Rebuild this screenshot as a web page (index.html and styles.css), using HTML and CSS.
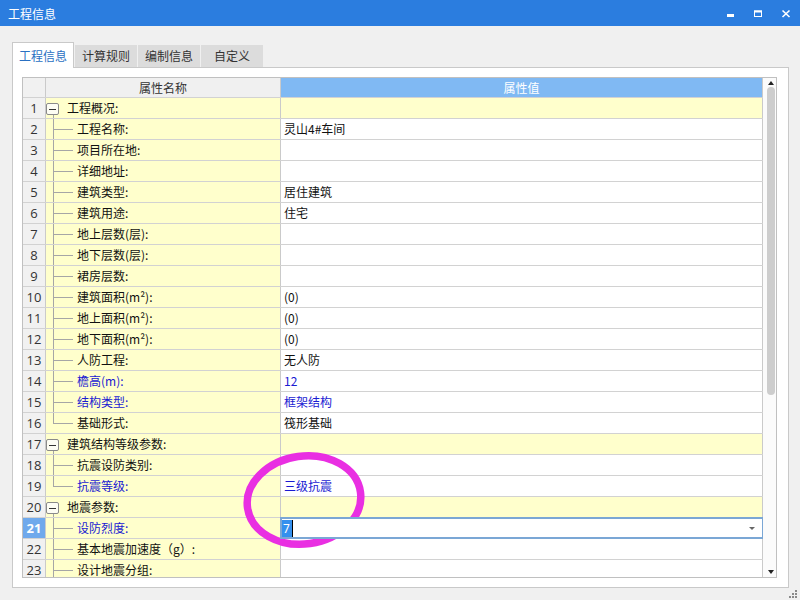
FILE: index.html
```html
<!DOCTYPE html>
<html>
<head>
<meta charset="utf-8">
<link rel="stylesheet" href="styles.css">
</head>
<body>
<div class="window">
  <div class="titlebar">
    <span class="title">工程信息</span>
    <div class="controls">
      <svg class="ctl" width="28" height="26" viewBox="0 0 28 26"><rect x="11" y="14" width="7" height="3" fill="#fff"/></svg>
      <svg class="ctl" width="28" height="26" viewBox="0 0 28 26"><rect x="10.5" y="11" width="7" height="5.5" fill="none" stroke="#fff" stroke-width="1"/><rect x="10" y="10.5" width="8" height="2" fill="#fff"/></svg>
      <svg class="ctl" width="28" height="26" viewBox="0 0 28 26"><path d="M10.5 10.5 L17.5 17 M17.5 10.5 L10.5 17" stroke="#fff" stroke-width="1.6" fill="none"/></svg>
    </div>
  </div>
  <div class="content">
    <div class="tabs">
      <div class="tab active">工程信息</div>
      <div class="tab">计算规则</div>
      <div class="tab">编制信息</div>
      <div class="tab">自定义</div>
    </div>
    <div class="panel">
      <div class="grid">
        <div class="table">
          <div class="row head"><div class="num"></div><div class="name">属性名称</div><div class="val">属性值</div></div>
          <div class="row group"><div class="num">1</div><div class="name open"><span class="box"></span><span>工程概况:</span></div><div class="val"></div></div>
          <div class="row"><div class="num">2</div><div class="name child">工程名称:</div><div class="val">灵山4#车间</div></div>
          <div class="row"><div class="num">3</div><div class="name child">项目所在地:</div><div class="val"></div></div>
          <div class="row"><div class="num">4</div><div class="name child">详细地址:</div><div class="val"></div></div>
          <div class="row"><div class="num">5</div><div class="name child">建筑类型:</div><div class="val">居住建筑</div></div>
          <div class="row"><div class="num">6</div><div class="name child">建筑用途:</div><div class="val">住宅</div></div>
          <div class="row"><div class="num">7</div><div class="name child">地上层数(层):</div><div class="val"></div></div>
          <div class="row"><div class="num">8</div><div class="name child">地下层数(层):</div><div class="val"></div></div>
          <div class="row"><div class="num">9</div><div class="name child">裙房层数:</div><div class="val"></div></div>
          <div class="row"><div class="num">10</div><div class="name child">建筑面积(m²):</div><div class="val">(0)</div></div>
          <div class="row"><div class="num">11</div><div class="name child">地上面积(m²):</div><div class="val">(0)</div></div>
          <div class="row"><div class="num">12</div><div class="name child">地下面积(m²):</div><div class="val">(0)</div></div>
          <div class="row"><div class="num">13</div><div class="name child">人防工程:</div><div class="val">无人防</div></div>
          <div class="row"><div class="num">14</div><div class="name child blue">檐高(m):</div><div class="val blue">12</div></div>
          <div class="row"><div class="num">15</div><div class="name child blue">结构类型:</div><div class="val blue">框架结构</div></div>
          <div class="row"><div class="num">16</div><div class="name child last">基础形式:</div><div class="val">筏形基础</div></div>
          <div class="row group"><div class="num">17</div><div class="name open"><span class="box"></span><span>建筑结构等级参数:</span></div><div class="val"></div></div>
          <div class="row"><div class="num">18</div><div class="name child">抗震设防类别:</div><div class="val"></div></div>
          <div class="row"><div class="num">19</div><div class="name child last blue">抗震等级:</div><div class="val blue">三级抗震</div></div>
          <div class="row group"><div class="num">20</div><div class="name open"><span class="box"></span><span>地震参数:</span></div><div class="val"></div></div>
          <div class="row current"><div class="num">21</div><div class="name child blue">设防烈度:</div><div class="val editing"><span class="sel">7</span><span class="drop"></span></div></div>
          <div class="row"><div class="num">22</div><div class="name child">基本地震加速度（g）:</div><div class="val"></div></div>
          <div class="row"><div class="num">23</div><div class="name child">设计地震分组:</div><div class="val"></div></div>
        </div>
        <div class="scrollbar">
          <span class="arrow up"></span>
          <div class="thumb"></div>
          <span class="arrow down"></span>
        </div>
      </div>
    </div>
  </div>
  <div class="footer">
    <svg width="12" height="12" viewBox="0 0 12 12">
      <rect x="8" y="2" width="2" height="2" fill="#8a8a8a"/>
      <rect x="5" y="5" width="2" height="2" fill="#8a8a8a"/>
      <rect x="8" y="5" width="2" height="2" fill="#8a8a8a"/>
      <rect x="2" y="8" width="2" height="2" fill="#8a8a8a"/>
      <rect x="5" y="8" width="2" height="2" fill="#8a8a8a"/>
      <rect x="8" y="8" width="2" height="2" fill="#8a8a8a"/>
    </svg>
  </div>
</div>
<svg class="mark" width="136" height="106" viewBox="0 0 136 106">
  <ellipse cx="68" cy="52" rx="57" ry="44" fill="none" stroke="#e92fe2" stroke-width="7.5" transform="rotate(-8 68 52)"/>
</svg>
</body>
</html>
```
FILE: styles.css
```css
* { box-sizing: border-box; }
html, body { margin: 0; padding: 0; }
body {
  width: 800px;
  height: 600px;
  overflow: hidden;
  position: relative;
  background: #f0f0f0;
  font-family: "Noto Sans CJK SC", "Noto Sans", sans-serif;
  font-size: 12px;
  color: #111;
}
.window { display: flex; flex-direction: column; height: 600px; }
.titlebar {
  height: 26px;
  background: #2b7ddf;
  color: #fff;
  display: flex;
  align-items: center;
  padding-left: 8px;
  font-size: 12px;
}
.controls { margin-left: auto; display: flex; margin-right: 0; }
.ctl { display: block; }
.content { padding: 16px 11px 0 12px; }
.tabs { display: flex; gap: 1px; height: 25px; align-items: flex-end; }
.tab {
  width: 62px;
  height: 22px;
  background: #dcdcdc;
  color: #333;
  text-align: center;
  line-height: 22px;
  font-size: 12px;
}
.tab.active {
  height: 26px;
  line-height: 25px;
  background: #fff;
  border: 1px solid #c9c9c9;
  border-bottom: none;
  color: #2a70c2;
  margin-bottom: -1px;
  position: relative;
  z-index: 1;
}
.panel {
  height: 521px;
  border: 1px solid #c9c9c9;
  background: #fff;
  padding: 9px 11px 9px 9px;
}
.grid {
  height: 501px;
  border: 1px solid #c0c0c0;
  display: flex;
}
.table { flex: 1; overflow: hidden; display: flex; flex-direction: column; }
.row {
  display: flex;
  flex: none;
  height: 21px;
  line-height: 20px;
  border-bottom: 1px solid #d2d2d2;
}
.row.head { height: 20px; line-height: 19px; }
.num {
  width: 23px;
  flex: none;
  border-right: 1px solid #cacaca;
  background: #f1f1f1;
  text-align: center;
  font-family: "Open Sans", "Noto Sans", sans-serif;
  font-size: 13px;
  color: #333;
}
.name {
  width: 235px;
  flex: none;
  border-right: 1px solid #cacaca;
  background: #ffffcc;
  display: flex;
  align-items: center;
  white-space: nowrap;
}
.val {
  flex: 1;
  padding-left: 3px;
  border-right: 1px solid #cacaca;
  background: #fff;
  white-space: nowrap;
  display: flex;
  align-items: center;
}
.head .name { background: #f0f0f0; justify-content: center; color: #333; }
.head .val { background: #80b9f3; color: #fff; justify-content: center; padding-left: 0; }
.group .val { background: #ffffcc; }
.blue { color: #1a1ad2; }

.name.child {
  padding-left: 31px;
  background:
    linear-gradient(#a6a6a6, #a6a6a6) 7px 0 / 1px 100% no-repeat,
    linear-gradient(#a6a6a6, #a6a6a6) 8px 10px / 19px 1px no-repeat,
    #ffffcc;
}
.name.child.last {
  background:
    linear-gradient(#a6a6a6, #a6a6a6) 7px 0 / 1px 11px no-repeat,
    linear-gradient(#a6a6a6, #a6a6a6) 8px 10px / 19px 1px no-repeat,
    #ffffcc;
}
.name.open {
  align-items: flex-start;
  background:
    linear-gradient(#a6a6a6, #a6a6a6) 7px 17px / 1px 3px no-repeat,
    #ffffcc;
}
.box {
  width: 13px;
  height: 12px;
  margin-top: 5px;
  border: 1px solid #8a8a8a;
  border-radius: 2px;
  background: #fdfdf4;
  display: flex;
  align-items: center;
  justify-content: center;
  flex: none;
}
.box::before { content: ""; width: 7px; height: 1px; background: #333; }
.name.open span:last-child { margin-left: 8px; }

.current .num { background: #6fa9ec; color: #fff; font-weight: 700; }
.val.editing {
  outline: 2px solid #7ba7d5;
  outline-offset: -1px;
  position: relative;
  z-index: 1;
  padding-left: 1px;
}
.sel {
  background: #3490ee;
  color: #fff;
  line-height: 17px;
  height: 17px;
  padding: 0 2px 0 1px;
  border-right: 1px solid #000;
  font-family: "Noto Sans", sans-serif;
}
.drop {
  margin-left: auto;
  margin-right: 7px;
  width: 0;
  height: 0;
  border-left: 3px solid transparent;
  border-right: 3px solid transparent;
  border-top: 3px solid #666;
}

.scrollbar {
  width: 13px;
  flex: none;
  background: #fbfbfb;
  display: flex;
  flex-direction: column;
  align-items: center;
  padding: 3px 0 3px 2px;
}
.arrow { width: 0; height: 0; border-left: 3.5px solid transparent; border-right: 3.5px solid transparent; }
.arrow.up { border-bottom: 4px solid #222; }
.arrow.down { border-top: 4px solid #222; margin-top: auto; }
.thumb {
  width: 8px;
  height: 308px;
  margin-top: 2px;
  border-radius: 4px;
  background: #cdcdcd;
}
.footer { height: 12px; display: flex; justify-content: flex-end; padding-right: 1px; }
.mark { position: absolute; left: 236px; top: 448px; }
```
